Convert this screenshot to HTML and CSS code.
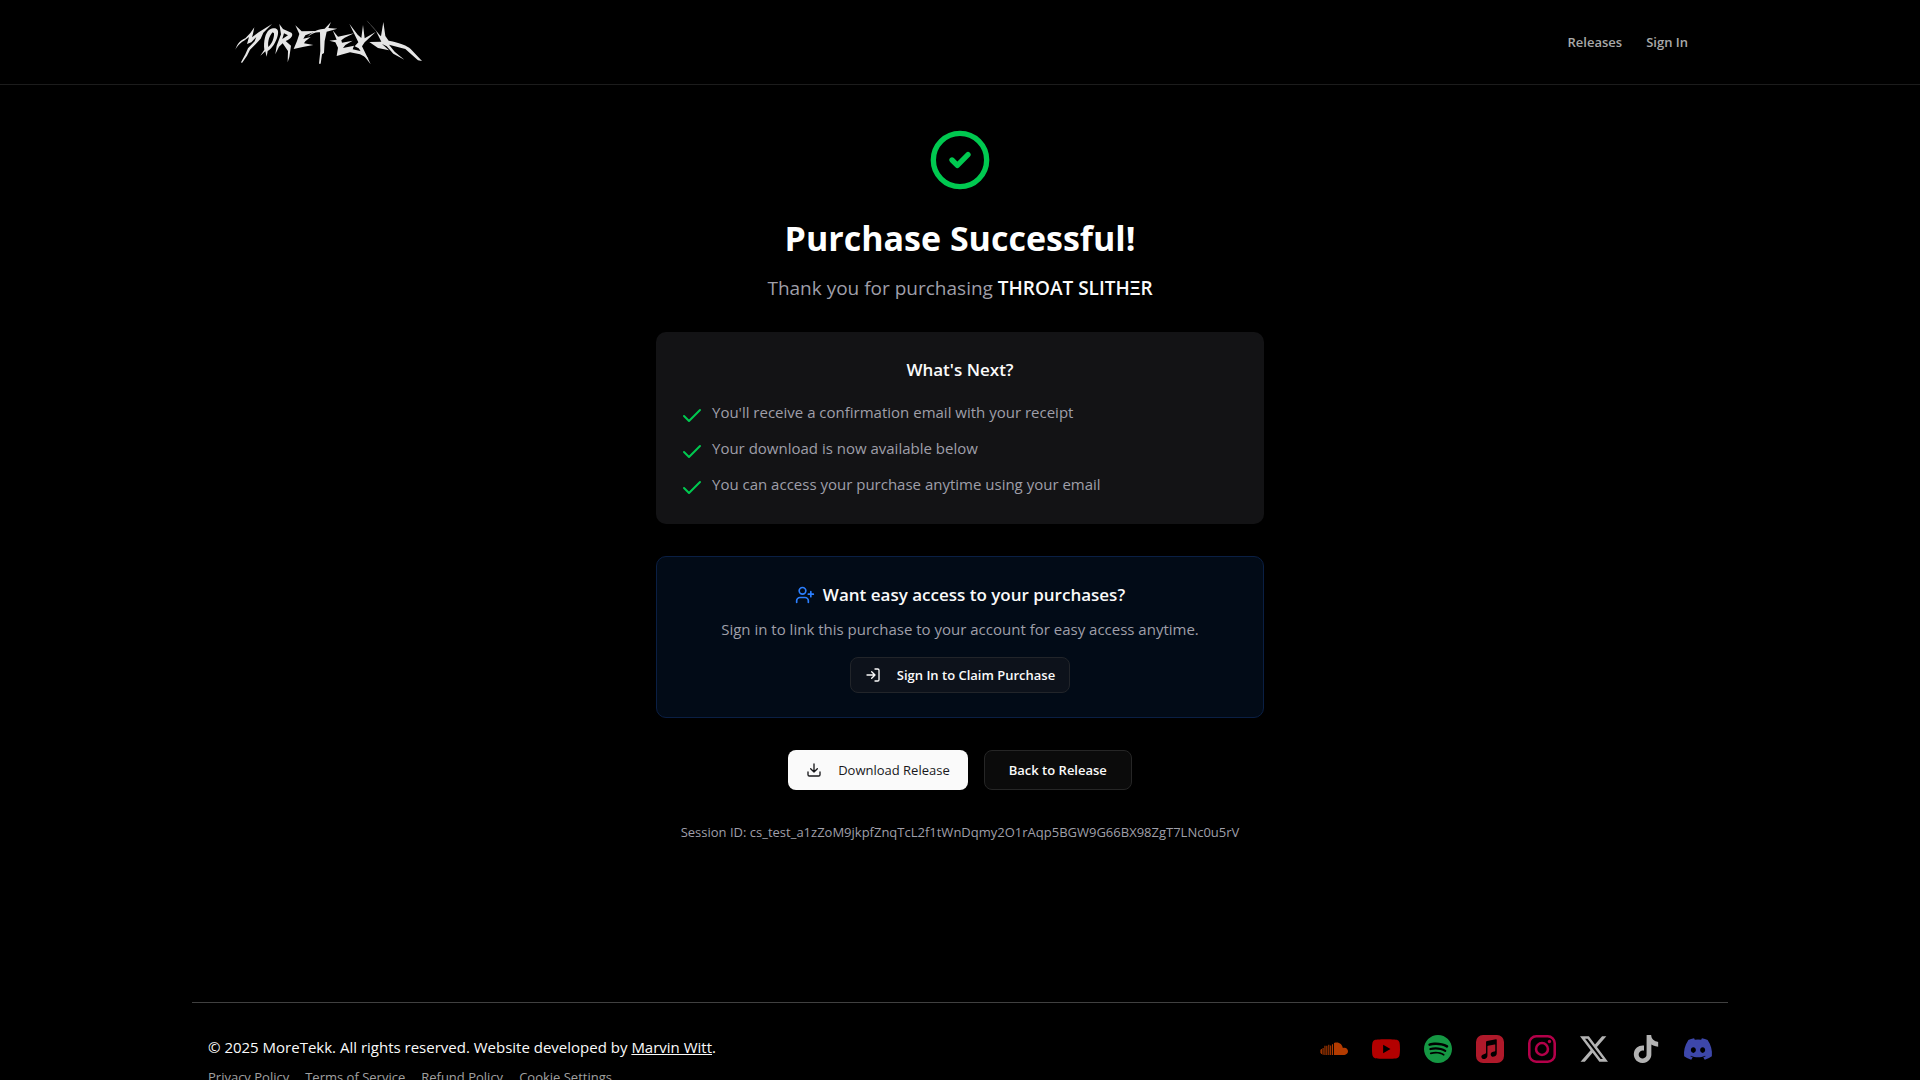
FILE: index.html
```html
<!DOCTYPE html>
<html lang="en">
<head>
<meta charset="utf-8">
<meta name="viewport" content="width=device-width, initial-scale=1">
<title>Purchase Successful – MoreTekk</title>
<link rel="stylesheet" href="styles.css">
</head>
<body>
<header class="site-header">
  <div class="header-inner">
    <a class="logo" href="#" aria-label="MoreTekk">
      <svg viewBox="36 48 579 150" fill="currentColor" fill-rule="evenodd" aria-hidden="true">
        <path d="M46 146C52 128 62 117 76 112L91 96 103 79 99 98 96 109 116 94 156 69 130 95 122 113 108 128 90 146 81 164 66 186 63 184 76 160 84 142 104 121 109 108 94 124 81 129 87 108 72 119C60 126 54 132 46 146Z"/>
        <path d="M148 86C165 77 179 82 173 104 168 124 156 142 143 150L140 167 136 151 121 164 133 146C130 120 136 95 148 86ZM158 94C149 102 142 122 145 138 155 130 163 112 162 97Z"/>
        <path d="M178 69L189 84 214 95C222 102 212 114 197 120L213 134 208 168 203 184 204 150 188 127 177 137 166 160 170 134 183 100ZM192 97L187 114 204 103Z"/>
        <path d="M226 73L245 91 290 90 256 103 250 113 272 108 256 121 252 127 280 132 248 138 221 144 231 120 238 99Z"/>
        <path d="M262 108C280 88 300 84 314 83L333 63 325 81 352 83 320 92 314 120 312 156 306 160 302 188 297 188 301 150 300 94C288 92 275 98 262 108Z"/>
        <path d="M338 88L354 107 402 97 374 110 364 118 366 125 398 119 376 132 369 141 402 134 398 145 424 151 446 173 420 160 390 154 350 165 354 140 346 124 328 119 350 116Z"/>
        <path d="M388 68L413 101 424 111 429 72 434 112 467 93 434 124 426 136 440 164 452 190 430 162 416 142 404 136 415 124Z"/>
        <path d="M438 56C456 74 474 96 483 106L490 63 496 105 506 119C540 125 562 134 572 144L606 180 594 178 556 144 507 131 524 152 553 176 520 158 500 136 486 129 507 148 474 141 448 123 484 122 468 90Z"/>
      </svg>
    </a>
    <nav class="main-nav">
      <a href="#">Releases</a>
      <a href="#">Sign In</a>
    </nav>
  </div>
</header>

<main class="content">
  <svg class="success-icon" viewBox="0 0 24 24" aria-hidden="true"><circle cx="12" cy="12" r="10"/><path d="m9 12 2 2 4-4"/></svg>
  <h1>Purchase Successful!</h1>
  <p class="lead">Thank you for purchasing <strong>THROAT SLITHΞR</strong></p>

  <section class="card">
    <h2>What's Next?</h2>
    <ul class="steps">
      <li><svg viewBox="0 0 24 24" aria-hidden="true"><path d="M20 6 9 17l-5-5"/></svg><span>You'll receive a confirmation email with your receipt</span></li>
      <li><svg viewBox="0 0 24 24" aria-hidden="true"><path d="M20 6 9 17l-5-5"/></svg><span>Your download is now available below</span></li>
      <li><svg viewBox="0 0 24 24" aria-hidden="true"><path d="M20 6 9 17l-5-5"/></svg><span>You can access your purchase anytime using your email</span></li>
    </ul>
  </section>

  <section class="card card-claim">
    <h2><svg viewBox="0 0 24 24" aria-hidden="true"><path d="M16 21v-2a4 4 0 0 0-4-4H6a4 4 0 0 0-4 4v2"/><circle cx="9" cy="7" r="4"/><path d="M19 8v6M22 11h-6"/></svg>Want easy access to your purchases?</h2>
    <p>Sign in to link this purchase to your account for easy access anytime.</p>
    <button class="btn btn-small" type="button"><svg viewBox="0 0 24 24" aria-hidden="true"><path d="m10 17 5-5-5-5M15 12H3M15 3h4a2 2 0 0 1 2 2v14a2 2 0 0 1-2 2h-4"/></svg>Sign In to Claim Purchase</button>
  </section>

  <div class="actions">
    <button class="btn btn-primary" type="button"><svg viewBox="0 0 24 24" aria-hidden="true"><path d="M12 15V3M21 15v4a2 2 0 0 1-2 2H5a2 2 0 0 1-2-2v-4M7 10l5 5 5-5"/></svg>Download Release</button>
    <button class="btn btn-outline" type="button">Back to Release</button>
  </div>
  <p class="session">Session ID: cs_test_a1zZoM9jkpfZnqTcL2f1tWnDqmy2O1rAqp5BGW9G66BX98ZgT7LNc0u5rV</p>
</main>

<footer class="site-footer">
  <div class="legal">
    <p>© 2025 MoreTekk. All rights reserved. Website developed by <a href="#">Marvin Witt</a>.</p>
    <nav class="legal-links">
      <a href="#">Privacy Policy</a>
      <a href="#">Terms of Service</a>
      <a href="#">Refund Policy</a>
      <a href="#">Cookie Settings</a>
    </nav>
  </div>
  <div class="social">
    <a class="soundcloud" href="#" aria-label="SoundCloud"><svg viewBox="0 0 24 24"><path d="M12 6.9c.8-.4 1.600-.5 2.300-.5 2.800 0 5 2.100 5.300 4.800.4-.2.8-.3 1.300-.3 1.800 0 3.100 1.400 3.100 3.100s-1.400 3.100-3.100 3.100H12zM10.300 7.900h.9v9.200h-.9zM8.700 8.900h.9v8.200h-.9zM7.100 8.400H8v8.700h-.9zM5.400 9.200h.9v7.900h-.9zM3.800 9.300h.9v7.800h-.9zM2.200 11.200h.9v5.700h-.9zM.8 11.900h.8v4.400H.8zM0 12.700h.4v2.700H0z"/></svg></a>
    <a class="youtube" href="#" aria-label="YouTube"><svg viewBox="0 0 24 24"><path d="M23.498 6.186a3.016 3.016 0 0 0-2.122-2.136C19.505 3.545 12 3.545 12 3.545s-7.505 0-9.377.505A3.017 3.017 0 0 0 .502 6.186C0 8.070 0 12 0 12s0 3.930.502 5.814a3.016 3.016 0 0 0 2.122 2.136c1.871.505 9.376.505 9.376.505s7.505 0 9.377-.505a3.015 3.015 0 0 0 2.122-2.136C24 15.930 24 12 24 12s0-3.930-.502-5.814zM9.545 15.568V8.432L15.818 12l-6.273 3.568z"/></svg></a>
    <a class="spotify" href="#" aria-label="Spotify"><svg viewBox="0 0 24 24"><path d="M12 0C5.400 0 0 5.400 0 12s5.400 12 12 12 12-5.400 12-12S18.660 0 12 0zm5.521 17.340c-.240.359-.660.480-1.021.240-2.820-1.740-6.360-2.101-10.561-1.141-.418.122-.779-.179-.899-.539-.120-.421.180-.780.540-.900 4.560-1.021 8.520-.600 11.640 1.320.420.180.479.659.301 1.020zm1.440-3.300c-.301.420-.841.600-1.262.300-3.239-1.980-8.159-2.580-11.939-1.380-.479.120-1.020-.120-1.140-.600-.120-.480.120-1.021.600-1.141C9.600 9.900 15 10.561 18.720 12.840c.361.181.540.780.241 1.200zm.120-3.360C15.240 8.400 8.820 8.160 5.160 9.301c-.600.179-1.200-.181-1.380-.721-.180-.601.180-1.200.720-1.381 4.260-1.260 11.280-1.020 15.721 1.621.539.300.719 1.020.419 1.560-.299.421-1.020.599-1.559.300z"/></svg></a>
    <a class="apple" href="#" aria-label="Apple Music"><svg viewBox="0 0 24 24" fill-rule="evenodd"><path d="M6 0h12a6 6 0 0 1 6 6v12a6 6 0 0 1-6 6H6a6 6 0 0 1-6-6V6a6 6 0 0 1 6-6zM17.100 3.600L9.400 5.200C8.800 5.300 8.600 5.700 8.600 6.300v8.800c0 .6-.2.900-.8 1l-1.100.3c-1.500.4-2.200 1.300-2.100 2.500.2 1.400 1.600 2.100 3.100 1.600 1.500-.5 2.100-1.600 2.100-3.100V9.900c0-.4.100-.5.500-.6l5.700-1.200c.3-.1.500 0 .5.300v4.800c0 .6-.3.800-.9 1l-1 .2c-1.400.4-2.100 1.300-2 2.500.2 1.400 1.600 2 3 1.600 1.600-.5 2.200-1.600 2.200-3.100V4.300c0-.6-.2-.8-.7-.7z"/></svg></a>
    <a class="instagram" href="#" aria-label="Instagram"><svg viewBox="0 0 24 24"><rect x="1.100" y="1.100" width="21.800" height="21.800" rx="6" fill="none" stroke="currentColor" stroke-width="2.200"/><circle cx="12" cy="12" r="5.100" fill="none" stroke="currentColor" stroke-width="2.200"/><circle cx="18.400" cy="5.600" r="1.450"/></svg></a>
    <a href="#" aria-label="X"><svg viewBox="0 0 24 24"><path d="M18.901 1.153h3.680l-8.040 9.190L24 22.846h-7.406l-5.800-7.584-6.638 7.584H.474l8.600-9.830L0 1.154h7.594l5.243 6.932ZM17.610 20.644h2.039L6.486 3.240H4.298Z"/></svg></a>
    <a href="#" aria-label="TikTok"><svg viewBox="0 0 24 24"><path d="M12.525.020c1.310-.020 2.610-.010 3.910-.020.080 1.530.630 3.090 1.750 4.170 1.120 1.110 2.700 1.620 4.240 1.790v4.030c-1.440-.050-2.890-.350-4.200-.970-.570-.260-1.100-.590-1.620-.930-.010 2.920.010 5.840-.020 8.750-.080 1.400-.540 2.790-1.350 3.940-1.310 1.920-3.580 3.170-5.910 3.210-1.430.080-2.860-.310-4.080-1.030-2.020-1.190-3.440-3.370-3.650-5.710-.020-.500-.030-1-.010-1.490.180-1.900 1.120-3.720 2.580-4.960 1.660-1.440 3.980-2.130 6.150-1.720.020 1.480-.040 2.960-.040 4.440-.990-.320-2.150-.230-3.020.370-.630.410-1.110 1.040-1.360 1.750-.210.510-.150 1.070-.140 1.610.240 1.640 1.820 3.020 3.500 2.870 1.120-.010 2.190-.660 2.770-1.610.190-.330.400-.670.410-1.060.100-1.790.060-3.570.070-5.360.010-4.030-.010-8.050.020-12.070z"/></svg></a>
    <a class="discord" href="#" aria-label="Discord"><svg viewBox="0 0 24 24"><path d="M20.317 4.370a19.791 19.791 0 0 0-4.885-1.515.074.074 0 0 0-.079.037c-.211.375-.445.865-.608 1.250a18.270 18.270 0 0 0-5.487 0 12.640 12.640 0 0 0-.617-1.250.077.077 0 0 0-.079-.037A19.736 19.736 0 0 0 3.677 4.370a.070.070 0 0 0-.032.028C.533 9.046-.319 13.580.099 18.058a.082.082 0 0 0 .031.056 19.900 19.900 0 0 0 5.993 3.030.078.078 0 0 0 .084-.028 14.090 14.090 0 0 0 1.226-1.994.076.076 0 0 0-.041-.106 13.107 13.107 0 0 1-1.872-.892.077.077 0 0 1-.008-.128c.126-.094.252-.192.372-.291a.074.074 0 0 1 .078-.011c3.928 1.793 8.180 1.793 12.061 0a.074.074 0 0 1 .079.010c.120.099.246.198.373.292a.077.077 0 0 1-.007.128 12.299 12.299 0 0 1-1.873.891.077.077 0 0 0-.041.107c.360.698.772 1.363 1.225 1.993a.076.076 0 0 0 .084.029 19.839 19.839 0 0 0 6.002-3.030.077.077 0 0 0 .032-.055c.500-5.177-.838-9.674-3.549-13.660a.061.061 0 0 0-.031-.029zM8.020 15.331c-1.183 0-2.157-1.086-2.157-2.419s.955-2.419 2.157-2.419c1.211 0 2.176 1.095 2.157 2.419 0 1.333-.955 2.419-2.157 2.419zm7.975 0c-1.183 0-2.157-1.086-2.157-2.419s.955-2.419 2.157-2.419c1.211 0 2.176 1.095 2.157 2.419 0 1.333-.946 2.419-2.157 2.419z"/></svg></a>
  </div>
</footer>
</body>
</html>
```

FILE: styles.css
```css
*, *::before, *::after { box-sizing: border-box; }

html { background: #000; scrollbar-width: none; }

body {
  margin: 0;
  min-height: 100vh;
  background: #000;
  color: #fafafa;
  font-family: "Open Sans", "Noto Sans", sans-serif;
  font-size: 15px;
  line-height: 24px;
}

h1, h2, p, ul { margin: 0; padding: 0; }
a { color: inherit; text-decoration: none; }
svg { display: block; flex: none; }

.site-header { border-bottom: 1px solid #1c1c1c; }

.header-inner {
  display: flex;
  align-items: center;
  justify-content: space-between;
  max-width: 1536px;
  height: 84px;
  margin: 0 auto;
  padding: 0 40px;
}

.logo { color: #e6e6e6; }
.logo svg { width: 193px; height: 50px; }

.main-nav {
  display: flex;
  gap: 24px;
  color: #a9a9a9;
  font-size: 13px;
  font-weight: 600;
  line-height: 20px;
}

.content {
  max-width: 672px;
  margin: 0 auto;
  padding: 43px 32px 160px;
  text-align: center;
}

.success-icon {
  width: 64px;
  height: 64px;
  margin: 0 auto 24px;
}

.content svg {
  fill: none;
  stroke: currentColor;
  stroke-width: 2;
  stroke-linecap: round;
  stroke-linejoin: round;
}

.content .success-icon,
.steps svg { color: #00c950; }

h1 {
  margin-bottom: 14px;
  color: #fff;
  font-size: 34px;
  font-weight: 700;
  line-height: 44px;
}

.lead {
  margin-bottom: 30px;
  color: #9f9fa9;
  font-size: 19px;
  line-height: 28px;
}

.lead strong { color: #fafafa; font-weight: 600; }

.card {
  margin-bottom: 32px;
  padding: 24px;
  border-radius: 10px;
  background: #131315;
  color: #9f9fa9;
}

.card h2 {
  display: flex;
  align-items: center;
  justify-content: center;
  gap: 8px;
  margin-bottom: 16px;
  color: #fafafa;
  font-size: 17px;
  font-weight: 600;
  line-height: 28px;
}

.steps {
  display: flex;
  flex-direction: column;
  gap: 8px;
  list-style: none;
  text-align: left;
}

.steps li { display: flex; gap: 8px; }
.steps svg { width: 24px; height: 24px; margin-top: 4px; }

.card-claim {
  border: 1px solid #0a1f44;
  background: #020b17;
}

.card-claim h2 { margin-bottom: 8px; }
.card-claim h2 svg { width: 20px; height: 20px; color: #2b7fff; }
.card-claim p { margin-bottom: 16px; }

.btn {
  display: inline-flex;
  align-items: center;
  justify-content: center;
  gap: 16px;
  height: 40px;
  border: 1px solid #262626;
  border-radius: 8px;
  background: #0b0b0b;
  color: #fafafa;
  font-family: inherit;
  font-size: 13px;
  font-weight: 600;
  line-height: 20px;
  cursor: pointer;
}

.btn svg { width: 16px; height: 16px; }

.btn-small {
  height: 36px;
  padding: 0 14px;
  border-color: #22252a;
  background: #0d121b;
  vertical-align: top;
}

.btn-primary {
  padding: 0 18px;
  border: 0;
  background: #fafafa;
  color: #18181b;
  font-weight: 400;
}

.btn-outline { padding: 0 24px; }

.actions {
  display: flex;
  justify-content: center;
  gap: 16px;
  margin-bottom: 32px;
}

.session {
  color: #9f9fa9;
  font-size: 13px;
  line-height: 20px;
}

.site-footer {
  display: flex;
  align-items: flex-start;
  justify-content: space-between;
  max-width: 1536px;
  margin: 0 auto;
  padding: 32px 16px;
  border-top: 1px solid #404040;
}

.legal p a { text-decoration: underline; }

.legal-links {
  display: flex;
  gap: 16px;
  margin-top: 8px;
  color: #a1a1a1;
  font-size: 13px;
  line-height: 20px;
}

.social { display: flex; gap: 24px; }
.social a { color: #fff; opacity: 0.7; }
.social svg { width: 28px; height: 28px; fill: currentColor; overflow: visible; }
.social .soundcloud { color: #ff5500; }
.social .youtube { color: #ff0000; }
.social .spotify { color: #1ed760; }
.social .apple { color: #fa243c; }
.social .instagram { color: #ff0069; }
.social .discord { color: #5865f2; }
```
